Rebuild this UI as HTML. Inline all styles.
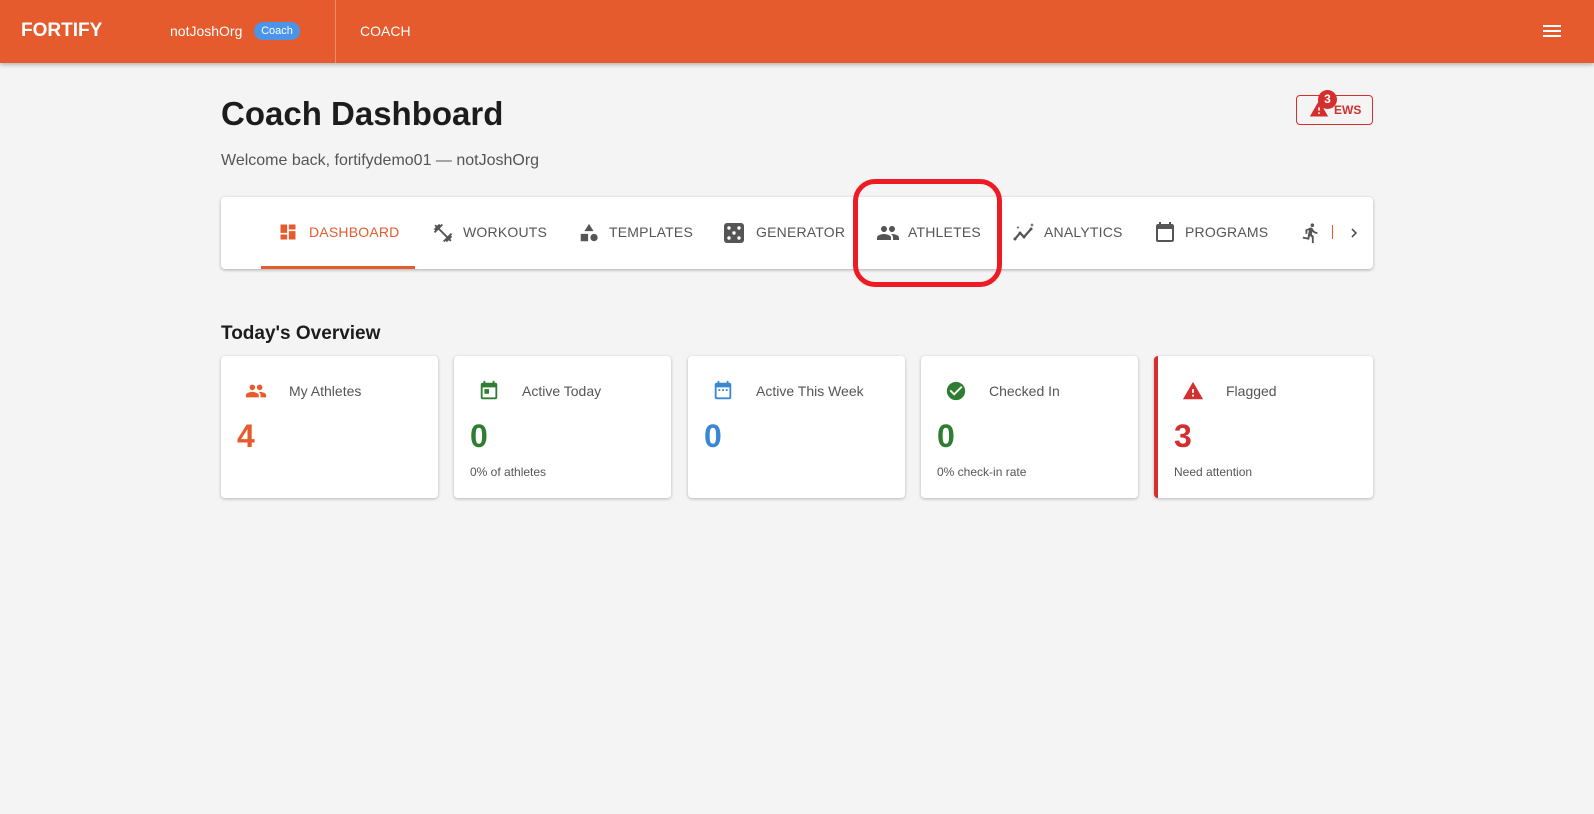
<!DOCTYPE html>
<html><head><meta charset="utf-8"><style>
*{box-sizing:border-box;margin:0;padding:0}
body{width:1594px;height:814px;background:#f4f4f4;font-family:"Liberation Sans",sans-serif;position:relative;overflow:hidden;color:#222}
.hdr{position:absolute;left:0;top:0;width:1594px;height:63px;background:#e55b2d;box-shadow:0 2px 4px rgba(0,0,0,.25);color:#fff}
.abs{position:absolute}
.tab{position:absolute;top:224px;font-size:14px;color:#555;letter-spacing:.2px;display:flex;align-items:center}
.card{position:absolute;top:356px;height:142px;width:217px;background:#fff;border-radius:4px;box-shadow:0 1px 3px rgba(0,0,0,.25)}
.card .lbl{position:absolute;left:68px;top:27px;font-size:14px;color:#555}
.card .ic{position:absolute;left:24px;top:24px}
.card .num{position:absolute;left:16px;top:62px;font-size:32px;font-weight:bold}
.card .sub{position:absolute;left:16px;top:109px;font-size:12px;color:#555}
</style></head><body>
<div class="hdr">
 <div class="abs" style="left:21px;top:20px;font-size:19px;font-weight:bold">FORTIFY</div>
 <div class="abs" style="left:170px;top:23px;font-size:14px">notJoshOrg</div>
 <div class="abs" style="left:254px;top:22px;width:46px;height:18px;border-radius:9px;background:#4a95e8;font-size:11px;text-align:center;line-height:18px">Coach</div>
 <div class="abs" style="left:335px;top:0;width:1px;height:63px;background:rgba(255,255,255,.3)"></div>
 <div class="abs" style="left:360px;top:23px;font-size:14px">COACH</div>
 <div class="abs" style="left:1543px;top:25px;width:18px;height:2px;background:#fff;box-shadow:0 5px 0 #fff,0 10px 0 #fff"></div>
</div>
<div class="abs" style="left:221px;top:95px;font-size:33px;font-weight:bold;color:#1c1c1c">Coach Dashboard</div>
<div class="abs" style="left:221px;top:152px;font-size:16px;color:#555">Welcome back, fortifydemo01 — notJoshOrg</div>
<div class="abs" style="left:1296px;top:95px;width:77px;height:30px;border:1px solid #d32f2f;border-radius:4px"></div>
<svg class="abs" style="left:1309px;top:99px" width="20" height="20" viewBox="0 0 24 24"><path fill="#d32f2f" d="M1 21h22L12 2 1 21zm12-3h-2v-2h2v2zm0-4h-2v-4h2v4z"/></svg>
<div class="abs" style="left:1318px;top:90px;width:19px;height:19px;border-radius:50%;background:#d32f2f;color:#fff;font-size:12px;font-weight:bold;text-align:center;line-height:19px">3</div>
<div class="abs" style="left:1334px;top:103px;font-size:12px;font-weight:bold;color:#d32f2f">EWS</div>

<div class="abs" style="left:221px;top:197px;width:1152px;height:72px;background:#fff;border-radius:4px;box-shadow:0 1px 3px rgba(0,0,0,.3)"></div>
<div class="abs" style="left:261px;top:266px;width:154px;height:3px;background:#e55b2d"></div>
<svg class="abs" style="left:278px;top:222px" width="20" height="20" viewBox="0 0 24 24"><path fill="#e55b2d" d="M3 13h8V3H3v10zm0 8h8v-6H3v6zm10 0h8V11h-8v10zm0-18v6h8V3h-8z"/></svg>
<div class="tab" style="left:309px;color:#e55b2d">DASHBOARD</div>
<svg class="abs" style="left:432px;top:222px" width="22" height="22" viewBox="0 0 24 24"><path fill="#555" d="M20.57 14.86 22 13.43 20.57 12 17 15.57 8.43 7 12 3.43 10.57 2 9.14 3.43 7.71 2 5.57 4.14 4.14 2.710 2.71 4.14l1.43 1.43L2 7.71l1.43 1.43L2 10.57 3.43 12 7 8.43 15.57 17 12 20.570 13.43 22l1.43-1.43L16.29 22l2.14-2.14 1.43 1.43 1.43-1.43-1.43-1.43L22 16.29z"/></svg>
<div class="tab" style="left:463px">WORKOUTS</div>
<svg class="abs" style="left:578px;top:222px" width="22" height="22" viewBox="0 0 24 24"><path fill="#555" d="M12 2 7 10h10z M3 13h8v8H3z M17.5 13a4 4 0 1 0 0 8 4 4 0 0 0 0-8z"/></svg>
<div class="tab" style="left:609px">TEMPLATES</div>
<svg class="abs" style="left:724px;top:223px" width="20" height="20" viewBox="0 0 20 20"><rect width="20" height="20" rx="3" fill="#555"/><circle cx="5" cy="5" r="1.7" fill="#fff"/><circle cx="15" cy="5" r="1.7" fill="#fff"/><circle cx="10" cy="10" r="1.7" fill="#fff"/><circle cx="5" cy="15" r="1.7" fill="#fff"/><circle cx="15" cy="15" r="1.7" fill="#fff"/></svg>
<div class="tab" style="left:756px">GENERATOR</div>
<svg class="abs" style="left:876px;top:221px" width="24" height="24" viewBox="0 0 24 24"><path fill="#555" d="M16 11c1.66 0 2.99-1.34 2.99-3S17.66 5 16 5s-3 1.34-3 3 1.34 3 3 3zm-8 0c1.66 0 2.99-1.34 2.99-3S9.660 5 8 5 5 6.34 5 8s1.34 3 3 3zm0 2c-2.33 0-7 1.17-7 3.5V19h14v-2.5C15 14.17 10.33 13 8 13zm8 0c-.29 0-.62.02-.97.05 1.16.84 1.97 1.97 1.97 3.45V19h6v-2.5c0-2.33-4.67-3.5-7-3.5z"/></svg>
<div class="tab" style="left:908px">ATHLETES</div>
<svg class="abs" style="left:1012px;top:221px" width="24" height="24" viewBox="0 0 24 24"><path fill="none" stroke="#555" stroke-width="2.2" d="M3 18l5-6 4 4 7-8"/><circle cx="3" cy="18" r="1.5" fill="#555"/><circle cx="8" cy="12" r="1.5" fill="#555"/><circle cx="12" cy="16" r="1.5" fill="#555"/><circle cx="19" cy="8" r="1.5" fill="#555"/><path fill="#555" d="M20 2l.6 1.4L22 4l-1.4.6L20 6l-.6-1.4L18 4l1.4-.6zM6 5l.5 1 1 .5-1 .5L6 8l-.5-1-1-.5 1-.5z"/></svg>
<div class="tab" style="left:1044px">ANALYTICS</div>
<svg class="abs" style="left:1153px;top:221px" width="24" height="24" viewBox="0 0 24 24"><path fill="#555" d="M19 3h-1V1h-2v2H8V1H6v2H5c-1.11 0-2 .9-2 2v14a2 2 0 0 0 2 2h14c1.1 0 2-.9 2-2V5c0-1.1-.9-2-2-2zm0 16H5V8h14v11z"/></svg>
<div class="tab" style="left:1185px">PROGRAMS</div>
<svg class="abs" style="left:1300px;top:222px" width="22" height="22" viewBox="0 0 24 24"><path fill="#555" d="M13.49 5.48c1.1 0 2-.9 2-2s-.9-2-2-2-2 .9-2 2 .9 2 2 2zm-3.6 13.9 1-4.4 2.1 2v6h2v-7.5l-2.1-2 .6-3c1.3 1.5 3.3 2.5 5.5 2.5v-2c-1.9 0-3.5-1-4.3-2.4l-1-1.6c-.4-.6-1-1-1.7-1-.3 0-.5.1-.8.1l-5.2 2.2v4.7h2v-3.4l1.8-.7-1.6 8.1-4.9-1-.4 2 7 1.4z"/></svg>
<div class="abs" style="left:1332px;top:225px;width:1px;height:14px;background:#e55b2d"></div>
<svg class="abs" style="left:1345px;top:224px" width="18" height="18" viewBox="0 0 24 24"><path fill="#444" d="M10 6 8.59 7.41 13.17 12l-4.58 4.59L10 18l6-6z"/></svg>

<div class="abs" style="left:853px;top:179px;width:149px;height:108px;border:5px solid #ed1c24;border-radius:22px"></div>

<div class="abs" style="left:221px;top:323px;font-size:19px;font-weight:bold;color:#1c1c1c">Today's Overview</div>

<div class="card" style="left:221px">
 <svg class="ic" width="22" height="22" viewBox="0 0 24 24"><path fill="#e55b2d" d="M16 11c1.66 0 2.99-1.34 2.99-3S17.66 5 16 5s-3 1.34-3 3 1.34 3 3 3zm-8 0c1.66 0 2.99-1.34 2.99-3S9.66 5 8 5 5 6.34 5 8s1.34 3 3 3zm0 2c-2.33 0-7 1.17-7 3.5V19h14v-2.5C15 14.17 10.33 13 8 13zm8 0c-.29 0-.62.02-.97.05 1.16.84 1.97 1.97 1.97 3.45V19h6v-2.5c0-2.33-4.67-3.5-7-3.5z"/></svg>
 <div class="lbl">My Athletes</div><div class="num" style="color:#e55b2d">4</div>
</div>
<div class="card" style="left:454px">
 <svg class="ic" width="22" height="22" viewBox="0 0 24 24"><path fill="#2e7d32" d="M19 3h-1V1h-2v2H8V1H6v2H5c-1.11 0-2 .9-2 2v14a2 2 0 0 0 2 2h14c1.1 0 2-.9 2-2V5c0-1.1-.9-2-2-2zm0 16H5V8h14v11zM7 10h5v5H7z"/></svg>
 <div class="lbl">Active Today</div><div class="num" style="color:#2e7d32">0</div><div class="sub">0% of athletes</div>
</div>
<div class="card" style="left:688px">
 <svg class="ic" width="22" height="22" viewBox="0 0 24 24"><path fill="#3a87d4" d="M19 3h-1V1h-2v2H8V1H6v2H5c-1.11 0-2 .9-2 2v14a2 2 0 0 0 2 2h14c1.1 0 2-.9 2-2V5c0-1.1-.9-2-2-2zm0 16H5V8h14v11zM7 10h2v2H7zm4 0h2v2h-2zm4 0h2v2h-2z"/></svg>
 <div class="lbl">Active This Week</div><div class="num" style="color:#3a87d4">0</div>
</div>
<div class="card" style="left:921px">
 <svg class="ic" width="22" height="22" viewBox="0 0 24 24"><path fill="#2e7d32" d="M12 2C6.48 2 2 6.48 2 12s4.48 10 10 10 10-4.48 10-10S17.52 2 12 2zm-2 15-5-5 1.41-1.41L10 14.17l7.59-7.59L19 8l-9 9z"/></svg>
 <div class="lbl">Checked In</div><div class="num" style="color:#2e7d32">0</div><div class="sub">0% check-in rate</div>
</div>
<div class="card" style="left:1154px;width:219px;border-left:4px solid #d32f2f">
 <svg class="ic" width="22" height="22" viewBox="0 0 24 24"><path fill="#d32f2f" d="M1 21h22L12 2 1 21zm12-3h-2v-2h2v2zm0-4h-2v-4h2v4z"/></svg>
 <div class="lbl">Flagged</div><div class="num" style="color:#d32f2f;left:16px">3</div><div class="sub">Need attention</div>
</div>
</body></html>
